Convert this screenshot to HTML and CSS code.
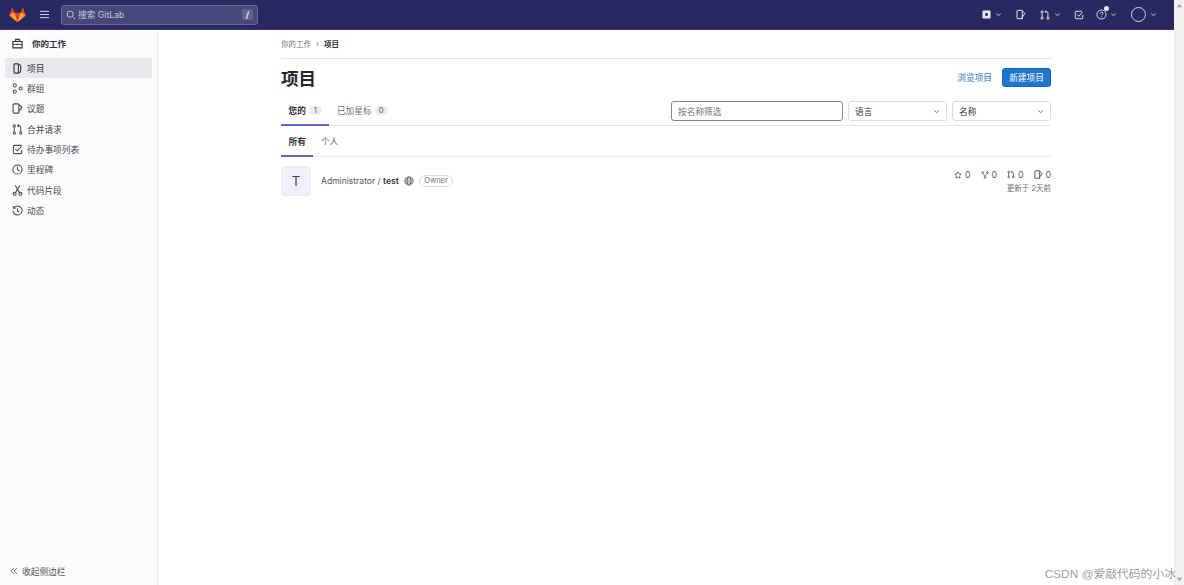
FILE: index.html
```html
<!DOCTYPE html>
<html lang="zh">
<head>
<meta charset="utf-8">
<title>项目</title>
<link rel="stylesheet" href="styles.css">
</head>
<body>
<div class="window">
  <div class="page">
    <header class="topbar">
      <svg class="logo" viewBox="0 0 24 24" width="17" height="17"><path fill="#e24329" d="M12 22.5 1.2 14.2c-.4-.3-.5-.8-.4-1.2L3.9 2.4c.1-.4.7-.4.9 0L7.6 9.6h8.8l2.8-7.2c.2-.4.8-.4.9 0L23.200 13c.1.4 0 .9-.4 1.200z"/><path fill="#fc6d26" d="M12 22.500 7.600 9.600 1 11.800l-.2 1.200c-.1.4 0 .9.4 1.200z"/><path fill="#fc6d26" d="m12 22.500 4.400-12.900 6.600 2.200.2 1.200c.1.400 0 .9-.4 1.200z"/><path fill="#fca326" d="M1 11.800 7.600 9.600 12 22.500 5 17zM23 11.800l-6.600-2.200L12 22.500l7-5.500z"/></svg>
      <svg class="burger" viewBox="0 0 12 10" width="11" height="9"><path d="M1 1.500h10M1 5h10M1 8.500h10" stroke="#d6d4e8" stroke-width="1.100" fill="none"/></svg>
      <div class="search">
        <svg viewBox="0 0 12 12" width="10" height="10"><circle cx="5" cy="5" r="3.700" stroke="#cfcde4" fill="none" stroke-width="1.100"/><path d="m7.800 7.800 3 3" stroke="#cfcde4" stroke-width="1.100"/></svg>
        <span class="search-text">搜索 GitLab</span>
        <kbd class="slash">/</kbd>
      </div>
      <nav class="top-actions">
        <span class="top-item">
          <svg viewBox="0 0 10 10" width="9" height="9"><rect x=".5" y=".5" width="9" height="9" rx="1.200" fill="#e8e7f3"/><rect x="3.500" y="3.500" width="3" height="3" fill="#2f2a6b"/></svg>
          <svg class="chev" viewBox="0 0 8 8" width="7" height="7"><path d="m1.500 3 2.500 2.300L6.500 3" fill="none" stroke="#d6d4e8" stroke-width="1.100"/></svg>
        </span>
        <span class="top-item gap-a">
          <svg viewBox="0 0 12 12" width="10" height="11"><path d="M7.500 1H2.200a1 1 0 0 0-1 1v8a1 1 0 0 0 1 1h5.300M7.500 1.500l3.300 3.300-3.300 4.500v1.700V1.500" fill="none" stroke="#e8e7f3" stroke-width="1.200"/></svg>
        </span>
        <span class="top-item gap-b">
          <svg viewBox="0 0 12 12" width="10" height="10"><g fill="none" stroke="#e8e7f3" stroke-width="1.100"><circle cx="2.500" cy="2.200" r="1.300"/><circle cx="2.500" cy="9.800" r="1.300"/><circle cx="9.500" cy="9.800" r="1.300"/><path d="M2.500 3.500v5M9.500 8.500V3.500c0-1-.6-1.500-1.500-1.500H6M7.500.5 6 2l1.500 1.500"/></g></svg>
          <svg class="chev" viewBox="0 0 8 8" width="7" height="7"><path d="m1.500 3 2.500 2.300L6.500 3" fill="none" stroke="#d6d4e8" stroke-width="1.100"/></svg>
        </span>
        <span class="top-item gap-c">
          <svg viewBox="0 0 12 12" width="10" height="10"><path d="M10.500 6v3.500a1 1 0 0 1-1 1h-7a1 1 0 0 1-1-1v-7a1 1 0 0 1 1-1h7" fill="none" stroke="#e8e7f3" stroke-width="1.100"/><path d="m3.800 5.500 2 2 4.500-5" fill="none" stroke="#e8e7f3" stroke-width="1.100"/></svg>
        </span>
        <span class="top-item gap-d help">
          <svg viewBox="0 0 12 12" width="11" height="11"><circle cx="6" cy="6" r="5" fill="none" stroke="#e8e7f3"/><path d="M4.500 4.800c0-2 3-2 3-.2 0 1.200-1.500 1.200-1.500 2.400M6 8.200v1" fill="none" stroke="#e8e7f3"/></svg>
          <i class="dot"></i>
          <svg class="chev" viewBox="0 0 8 8" width="7" height="7"><path d="m1.500 3 2.500 2.300L6.500 3" fill="none" stroke="#d6d4e8" stroke-width="1.100"/></svg>
        </span>
        <span class="top-item gap-e">
          <i class="avatar-ring"></i>
          <svg class="chev" viewBox="0 0 8 8" width="7" height="7"><path d="m1.500 3 2.500 2.300L6.500 3" fill="none" stroke="#d6d4e8" stroke-width="1.100"/></svg>
        </span>
      </nav>
    </header>
    <div class="main">
      <aside class="sidebar">
        <div class="side-head">
          <span class="side-head-icon"><svg viewBox="0 0 12 12" width="11" height="11"><path d="M1 3.800h10v7H1zM4 3.800V1.500h4v2.300" fill="none" stroke="#303030" stroke-width="1.200"/><path d="M1 7h10" stroke="#303030"/><path d="M5.200 6.200h1.600v1.600H5.200z" fill="#303030"/></svg></span>
          <span>你的工作</span>
        </div>
        <ul class="side-list">
          <li class="side-item active"><svg viewBox="0 0 12 12" width="11" height="11"><path d="M3.200 1 7 1c1.200.4 2.500 1.400 2.500 2.500v5c0 1.100-1.300 2.100-2.500 2.500H3.200c-.6 0-1-.4-1-1V2c0-.6.4-1 1-1zM7 1v10" fill="none" stroke="#333238" stroke-width="1.200"/></svg>项目</li>
          <li class="side-item"><svg viewBox="0 0 12 12" width="11" height="11"><g fill="none" stroke="#4c4b52" stroke-width="1.100"><circle cx="3" cy="2.600" r="1.700"/><circle cx="3" cy="9.400" r="1.700"/><circle cx="9.400" cy="6" r="1.700"/></g></svg>群组</li>
          <li class="side-item"><svg viewBox="0 0 12 12" width="11" height="11"><path d="M7.500 1H2.200a1 1 0 0 0-1 1v8a1 1 0 0 0 1 1h5.300M7.500 1.500l3.300 3.300-3.300 4.500v1.700V1.500" fill="none" stroke="#4c4b52" stroke-width="1.200"/></svg>议题</li>
          <li class="side-item"><svg viewBox="0 0 12 12" width="11" height="11"><g fill="none" stroke="#4c4b52" stroke-width="1.100"><circle cx="2.500" cy="2.200" r="1.300"/><circle cx="2.500" cy="9.800" r="1.300"/><circle cx="9.500" cy="9.800" r="1.300"/><path d="M2.500 3.500v5M9.500 8.500V3.500c0-1-.6-1.500-1.500-1.500H6M7.500.5 6 2l1.500 1.500"/></g></svg>合并请求</li>
          <li class="side-item"><svg viewBox="0 0 12 12" width="11" height="11"><path d="M10.500 6.500v3a1 1 0 0 1-1 1h-7a1 1 0 0 1-1-1v-7a1 1 0 0 1 1-1h8" fill="none" stroke="#4c4b52" stroke-width="1.100"/><path d="m3.800 5.500 2 2 4.500-5" fill="none" stroke="#4c4b52" stroke-width="1.100"/></svg>待办事项列表</li>
          <li class="side-item"><svg viewBox="0 0 12 12" width="11" height="11"><circle cx="6" cy="6" r="5" fill="none" stroke="#4c4b52" stroke-width="1.100"/><path d="M6 2.800v3.400l2.200 1.400" fill="none" stroke="#4c4b52" stroke-width="1.100"/></svg>里程碑</li>
          <li class="side-item"><svg viewBox="0 0 12 12" width="11" height="11"><g fill="none" stroke="#4c4b52" stroke-width="1.200"><circle cx="2.800" cy="9.600" r="1.600"/><circle cx="9.200" cy="9.600" r="1.600"/><path d="M3.800 8.300 8.500.6M8.200 8.300 3.500.6"/></g></svg>代码片段</li>
          <li class="side-item"><svg viewBox="0 0 12 12" width="11" height="11"><path d="M2 3a5 5 0 1 1-1 3" fill="none" stroke="#4c4b52" stroke-width="1.100"/><path d="M1.500 1v2.500H4M6 3.500v3l2 1" fill="none" stroke="#4c4b52" stroke-width="1.100"/></svg>动态</li>
        </ul>
        <div class="collapse"><svg viewBox="0 0 10 10" width="8" height="8"><path d="M4.800 1.500 1.500 5l3.300 3.500M8.500 1.500 5.200 5l3.300 3.500" fill="none" stroke="#4c4b52"/></svg>收起侧边栏</div>
      </aside>
      <main class="content">
        <div class="crumbs"><span class="crumb">你的工作</span><span class="crumb-sep">›</span><b>项目</b></div>
        <div class="title-row">
          <h1>项目</h1>
          <a class="browse">浏览项目</a>
          <button class="new-btn">新建项目</button>
        </div>
        <div class="tabs-row">
          <div class="tab current">您的<span class="count">1</span></div>
          <div class="tab">已加星标<span class="count">0</span></div>
          <div class="filters">
            <div class="field name-filter">按名称筛选</div>
            <div class="field select lang">语言<svg viewBox="0 0 8 8" width="7" height="7"><path d="m1.500 3 2.500 2.300L6.500 3" fill="none" stroke="#555" stroke-width="1"/></svg></div>
            <div class="field select sort">名称<svg viewBox="0 0 8 8" width="7" height="7"><path d="m1.500 3 2.500 2.300L6.500 3" fill="none" stroke="#555" stroke-width="1"/></svg></div>
          </div>
        </div>
        <div class="subtabs-row">
          <div class="subtab current">所有</div>
          <div class="subtab">个人</div>
        </div>
        <div class="project">
          <div class="tile">T</div>
          <div class="project-name">Administrator / <b>test</b></div>
          <svg class="globe" viewBox="0 0 12 12" width="10" height="10"><g fill="none" stroke="#55545c" stroke-width=".9"><circle cx="6" cy="6" r="5"/><ellipse cx="6" cy="6" rx="2.300" ry="5"/><path d="M1 6h10M1.700 3.500h8.600M1.700 8.500h8.600"/></g></svg>
          <span class="role">Owner</span>
          <div class="project-stats">
            <div class="stats">
              <span><svg viewBox="0 0 12 12" width="8" height="8"><path d="m6 1.200 1.500 3.100 3.400.5-2.500 2.400.6 3.400L6 9l-3 1.600.6-3.400L1.100 4.800l3.400-.5z" fill="none" stroke="#55545c" stroke-width="1.200"/></svg>0</span>
              <span><svg viewBox="0 0 12 12" width="8" height="8"><g fill="none" stroke="#55545c" stroke-width="1.200"><circle cx="2.500" cy="2.200" r="1.300"/><circle cx="9.500" cy="2.200" r="1.300"/><circle cx="6" cy="9.800" r="1.300"/><path d="M2.500 3.500c0 2.500 3.500 1.800 3.500 5M9.500 3.500c0 2.500-3.500 1.800-3.500 5"/></g></svg>0</span>
              <span><svg viewBox="0 0 12 12" width="8" height="9"><g fill="none" stroke="#55545c" stroke-width="1.200"><circle cx="2.500" cy="2.200" r="1.300"/><circle cx="2.500" cy="9.800" r="1.300"/><circle cx="9.500" cy="9.800" r="1.300"/><path d="M2.500 3.500v5M9.500 8.500V3.500c0-1-.6-1.500-1.500-1.500H6M7.500.5 6 2l1.500 1.500"/></g></svg>0</span>
              <span><svg viewBox="0 0 12 12" width="9" height="9"><path d="M7.500 1H2.200a1 1 0 0 0-1 1v8a1 1 0 0 0 1 1h5.300M7.500 1.500l3.300 3.300-3.300 4.500v1.700V1.500" fill="none" stroke="#55545c" stroke-width="1.300"/></svg>0</span>
            </div>
            <div class="updated">更新于 2天前</div>
          </div>
        </div>
      </main>
    </div>
  </div>
  <div class="scrollbar"><svg viewBox="0 0 8 8" width="7" height="7"><path d="M4 2 1 6h6z" fill="#a0a0a0"/></svg><span class="scroll-spacer"></span><svg viewBox="0 0 8 8" width="7" height="7"><path d="M4 6 1 2h6z" fill="#a0a0a0"/></svg></div>
  <div class="watermark">CSDN @爱敲代码的小冰</div>
</div>
</body>
</html>
```

FILE: styles.css
```css
* { box-sizing: border-box; }
html, body { margin: 0; padding: 0; height: 100%; overflow: hidden; }
body {
  font-family: Inter, "Noto Sans CJK SC", "Noto Sans", sans-serif;
  font-size: 8.700px;
  color: #333238;
  background: #fff;
}
.window { display: flex; width: 1184px; height: 585px; position: relative; }
.page { flex: 1; display: flex; flex-direction: column; min-width: 0; }
.scrollbar {
  width: 10px;
  background: #f1f1f1;
  display: flex;
  flex-direction: column;
  align-items: center;
  padding: 2px 0;
}
.scroll-spacer { flex: 1; }

.topbar {
  height: 30px;
  flex: none;
  background: #292961;
  border-bottom: 1px solid #3d3a7a;
  display: flex;
  align-items: center;
  padding-left: 9px;
}
.logo { flex: none; }
.burger { flex: none; margin-left: 13px; }
.search {
  margin-left: 11px;
  width: 197px;
  height: 20px;
  background: #49487a;
  border: 1px solid #6a6a98;
  border-radius: 3px;
  display: flex;
  align-items: center;
  padding: 0 4px;
  color: #c7c6dd;
}
.search-text { margin-left: 2px; flex: 1; }
.slash {
  width: 11px;
  height: 11px;
  background: #64638f;
  border-radius: 2px;
  color: #e8e7f3;
  font: 700 9px/11px Inter, sans-serif;
  text-align: center;
}
.top-actions { margin-left: auto; display: flex; align-items: center; margin-right: 17px; }
.top-item { display: flex; align-items: center; gap: 4px; position: relative; }
.gap-a { margin-left: 14px; }
.gap-b { margin-left: 14px; }
.gap-c { margin-left: 13px; }
.gap-d { margin-left: 12px; }
.gap-e { margin-left: 14px; }
.help { gap: 3px; }
.dot {
  position: absolute;
  left: 8px;
  top: -3px;
  width: 5px;
  height: 5px;
  border-radius: 50%;
  background: #e8e7f3;
}
.avatar-ring {
  display: block;
  width: 15px;
  height: 15px;
  border-radius: 50%;
  border: 1px solid #d6d4e8;
}

.main { flex: 1; display: flex; min-height: 0; }
.sidebar {
  width: 158px;
  flex: none;
  background: #fbfafd;
  border-right: 1px solid #ececef;
  display: flex;
  flex-direction: column;
  padding: 3px 5px 6px;
}
.side-head {
  display: flex;
  align-items: center;
  gap: 5px;
  font-size: 8.500px;
  font-weight: 600;
  height: 20px;
  padding-left: 2px;
  margin-bottom: 5px;
  color: #333238;
}
.side-head-icon {
  width: 20px;
  height: 20px;
  background: #fff;
  border-radius: 3px;
  display: flex;
  align-items: center;
  justify-content: center;
}
.side-list { list-style: none; margin: 0; padding: 0; }
.side-item {
  height: 20px;
  margin-bottom: .4px;
  display: flex;
  align-items: center;
  gap: 4px;
  padding-left: 7px;
  border-radius: 3px;
  color: #4c4b52;
}
.side-item.active { background: #e9e8ec; color: #333238; }
.collapse {
  margin-top: auto;
  display: flex;
  align-items: center;
  gap: 4px;
  padding-left: 5px;
  height: 16px;
  color: #55545c;
}

.content { width: 770px; margin-left: 123px; flex: none; }
.crumbs {
  height: 29px;
  display: flex;
  align-items: center;
  gap: 5px;
  padding-bottom: 2px;
  border-bottom: 1px solid #e5e5e8;
  font-size: 7.500px;
}
.crumb { color: #737278; }
.crumb-sep { color: #737278; }
.crumbs b { font-weight: 600; color: #333238; }
.title-row { display: flex; align-items: center; height: 38px; }
h1 { margin: 0 0 2px; font-size: 17.500px; font-weight: 600; color: #28272d; flex: 1; }
.browse { color: #1f75cb; margin-right: 10px; margin-bottom: 1px; }
.new-btn {
  width: 49px;
  height: 19px;
  padding: 0;
  margin-bottom: 1px;
  background: #1f75cb;
  border: 1px solid #1068bf;
  border-radius: 3px;
  color: #fff;
  font: inherit;
}
.tabs-row {
  display: flex;
  align-items: stretch;
  height: 29px;
  border-bottom: 1px solid #e5e5e8;
}
.tab {
  display: flex;
  align-items: center;
  gap: 3px;
  padding: 0 7.500px;
  color: #737278;
  margin-bottom: -1px;
  border-bottom: 2px solid transparent;
}
.tab.current { color: #333238; font-weight: 600; border-bottom-color: #6666c4; }
.count {
  background: #ececef;
  border-radius: 7px;
  min-width: 13px;
  height: 9px;
  line-height: 9px;
  text-align: center;
  font-size: 7.500px;
  font-weight: 400;
  padding: 0 2px;
  color: #55545c;
}
.filters { margin-left: auto; display: flex; gap: 5px; padding-top: 4px; }
.field {
  height: 20px;
  border: 1px solid #bfbfc3;
  border-radius: 3px;
  display: flex;
  align-items: center;
  padding: 0 6px;
  color: #737278;
  background: #fff;
}
.name-filter { width: 172px; border-color: #89888d; }
.select { color: #333238; justify-content: space-between; border-color: #dcdcde; }
.lang { width: 99px; }
.sort { width: 99px; }
.subtabs-row {
  display: flex;
  height: 31px;
  border-bottom: 1px solid #e5e5e8;
}
.subtab {
  display: flex;
  align-items: center;
  padding: 1px 7.500px 0;
  color: #737278;
  margin-bottom: -1px;
  border-bottom: 2px solid transparent;
}
.subtab.current { color: #333238; font-weight: 600; border-bottom-color: #6666c4; }
.project { display: flex; align-items: center; height: 48px; }
.tile {
  width: 30px;
  height: 30px;
  border-radius: 4px;
  background: #f0effb;
  border: 1px solid #ebe9f7;
  color: #45454f;
  font-size: 13px;
  display: flex;
  align-items: center;
  justify-content: center;
  flex: none;
}
.project-name { margin-left: 10px; font-size: 8.550px; color: #55545c; }
.project-name b { font-weight: 600; color: #333238; }
.globe { margin-left: 5px; flex: none; }
.role {
  margin-left: 5px;
  height: 12px;
  line-height: 10px;
  border: 1px solid #dcdcde;
  border-radius: 7px;
  padding: 0 4.500px;
  font-size: 7.500px;
  color: #737278;
}
.project-stats { margin-left: auto; display: flex; flex-direction: column; align-items: flex-end; gap: 2px; }
.stats { display: flex; gap: 10px; color: #55545c; }
.stats span { display: flex; align-items: center; gap: 3px; }
.updated { font-size: 7.500px; color: #737278; }
.watermark {
  position: absolute;
  right: 8px;
  bottom: 4px;
  font-family: "Liberation Sans", "Noto Sans CJK SC", sans-serif;
  font-size: 11.800px;
  color: rgba(120, 120, 120, .75);
  white-space: nowrap;
}
```
